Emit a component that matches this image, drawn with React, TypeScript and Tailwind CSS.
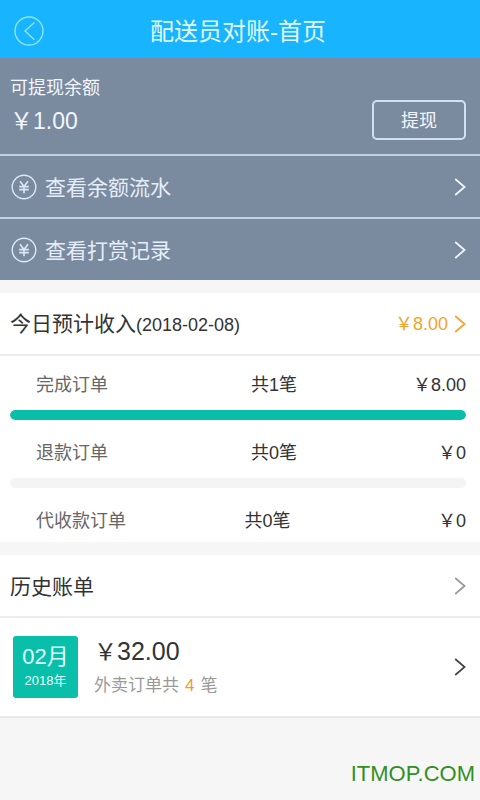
import React from "react";

function Chevron({ className = "" }: { className?: string }) {
  return (
    <svg className={`h-[18px] w-3 shrink-0 ${className}`} viewBox="0 0 12 18" fill="none" stroke="currentColor" strokeWidth="1.7" aria-hidden="true">
      <path d="M1.2 1 10.6 9 1.2 17" />
    </svg>
  );
}

function YuanIcon() {
  return (
    <svg className="h-[26px] w-[26px] shrink-0" viewBox="0 0 26 26" fill="none" stroke="#dce8f8" aria-hidden="true">
      <circle cx="13" cy="13" r="11.8" strokeWidth="1.4" />
      <path d="M9 7.2 13 12.4 17 7.2M13 12.4V19.2M8.2 12.6H17.8M8.2 15.6H17.8" strokeWidth="1.6" />
    </svg>
  );
}

function BackIcon() {
  return (
    <svg className="h-[30px] w-[30px]" viewBox="0 0 30 30" fill="none" stroke="#8fe4ff" strokeWidth="1.4" aria-hidden="true">
      <circle cx="15" cy="15" r="14" />
      <path d="M20.4 6.6 11 15l9.4 8.8" />
    </svg>
  );
}

const links = ["查看余额流水", "查看打赏记录"];

const orders = [
  { label: "完成订单", count: 1, amount: "8.00", percent: 100, cols: "grid-cols-2" },
  { label: "退款订单", count: 0, amount: "0", percent: 0, cols: "grid-cols-2" },
  { label: "代收款订单", count: 0, amount: "0", percent: null, cols: "grid-cols-[16fr_17fr]" },
];

export default function App() {
  return (
    <div className="flex min-h-screen flex-col bg-[#f6f6f6] font-['Liberation_Sans','Noto_Sans_CJK_SC',sans-serif] text-[#333]">
      <header className="grid h-[58px] grid-cols-[30px_1fr_30px] items-center bg-[#18b4fe] pt-1 pr-[18px] pl-3.5">
        <button type="button" aria-label="返回">
          <BackIcon />
        </button>
        <h1 className="pt-0.5 text-center text-[24px] leading-8 text-[#e2faff]">配送员对账-首页</h1>
      </header>

      <section className="bg-[#7a8a9f] text-[#f2f7ff]">
        <div className="flex h-24 items-end justify-between pr-3.5 pb-3.5 pl-2.5">
          <div>
            <p className="text-[18px] leading-7">可提现余额</p>
            <p className="text-[23px] leading-[38px]">￥1.00</p>
          </div>
          <button type="button" className="h-10 w-[94px] rounded-[5px] border-2 border-[#d3e0f2] pt-0.5 text-[18px] leading-6">
            提现
          </button>
        </div>
        {links.map((text) => (
          <a key={text} href="#" className="flex h-[63px] items-center gap-2 border-t-2 border-[#c3d1e4] pr-3.5 pl-[11px]">
            <YuanIcon />
            <span className="flex-1 pt-0.5 text-[21px] leading-8 text-[#e6eefb]">{text}</span>
            <Chevron />
          </a>
        ))}
      </section>

      <section className="mt-[13px] bg-white">
        <a href="#" className="flex h-[63px] items-center border-b-2 border-[#ededed] pr-3.5 pl-2.5">
          <h2 className="flex-1 pt-0.5 text-[21px] leading-8">
            今日预计收入<span className="text-[18px]">(2018-02-08)</span>
          </h2>
          <span className="mr-1.5 text-[18px] leading-8 text-[#f3a32c]">￥8.00</span>
          <Chevron className="text-[#f3a32c]" />
        </a>
        {orders.map((o) => (
          <div key={o.label} className="pr-3.5 pl-2.5">
            <div className={`grid pt-[13px] pb-[5px] pl-[26px] text-[18px] leading-8 ${o.cols}`}>
              <span className="text-[#666]">{o.label}</span>
              <div className="flex justify-between">
                <span>共{o.count}笔</span>
                <span>￥{o.amount}</span>
              </div>
            </div>
            {o.percent !== null && (
              <div role="progressbar" aria-label={o.label} aria-valuenow={o.percent} className="my-1 h-2.5 overflow-hidden rounded-full bg-[#f4f4f4]">
                <div className="h-full rounded-full bg-[#0abfa9]" style={{ width: `${o.percent}%` }} />
              </div>
            )}
          </div>
        ))}
      </section>

      <section className="mt-[13px] bg-white">
        <a href="#" className="flex h-[63px] items-center justify-between border-b-2 border-[#ededed] pr-3.5 pl-2.5">
          <h2 className="pt-0.5 text-[21px] leading-8">历史账单</h2>
          <Chevron className="text-[#999]" />
        </a>
        <a href="#" className="flex h-[100px] items-center border-b-2 border-[#e8e8e8] pr-3.5 pl-[13px]">
          <div className="flex h-[62px] w-[65px] flex-col items-center justify-center rounded-[3px] bg-[#0abfa9] text-[#e0fffb]">
            <span className="text-[22px] leading-7">02月</span>
            <span className="text-[13px] leading-5">2018年</span>
          </div>
          <div className="ml-4 flex-1">
            <p className="text-[25px] leading-9">
              <span className="text-[23px]">￥</span>32.00
            </p>
            <p className="text-[17px] leading-8 text-[#999]">
              外卖订单共<span className="mx-1.5 text-[#f59a23]">4</span>笔
            </p>
          </div>
          <Chevron className="text-[#444]" />
        </a>
      </section>

      <footer className="flex flex-1 items-end justify-end px-[5px] pb-3 text-[22px] leading-7 text-[#338f1f]">ITMOP.COM</footer>
    </div>
  );
}
